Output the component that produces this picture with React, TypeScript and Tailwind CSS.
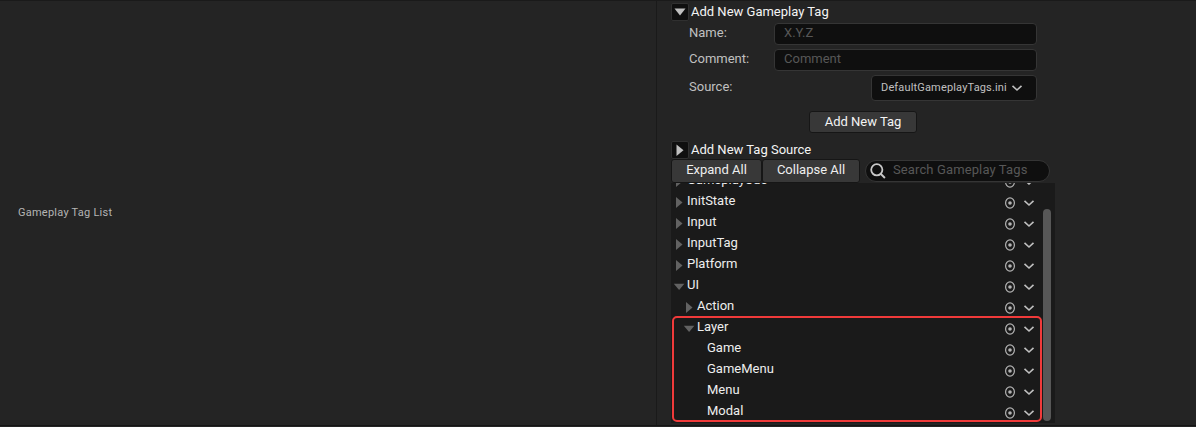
import type { ReactNode } from 'react';

type Row = { label: string; depth: number; state?: 'open' | 'closed' };

const rows: Row[] = [
  { label: 'GameplayCue', depth: 0, state: 'closed' },
  { label: 'InitState', depth: 0, state: 'closed' },
  { label: 'Input', depth: 0, state: 'closed' },
  { label: 'InputTag', depth: 0, state: 'closed' },
  { label: 'Platform', depth: 0, state: 'closed' },
  { label: 'UI', depth: 0, state: 'open' },
  { label: 'Action', depth: 1, state: 'closed' },
  { label: 'Layer', depth: 1, state: 'open' },
  { label: 'Game', depth: 2 },
  { label: 'GameMenu', depth: 2 },
  { label: 'Menu', depth: 2 },
  { label: 'Modal', depth: 2 },
];

const indents = ['pl-0', 'pl-[10px]', 'pl-[20px]'];

function Chevron() {
  return (
    <svg width="12" height="8" viewBox="0 0 12 8" fill="none" stroke="#c0c0c0" strokeWidth="1.6">
      <path d="M1.5 1.8 6 6 10.5 1.8" />
    </svg>
  );
}

function Arrow({ state }: { state?: 'open' | 'closed' }) {
  return (
    <svg width="16" height="21" viewBox="0 0 16 21" className="shrink-0" fill="#626262">
      {state === 'closed' && <path d="M5 7v11l6.5-5.5z" />}
      {state === 'open' && <path d="M2.8 9.8h10.6L8.1 16z" />}
    </svg>
  );
}

function TreeRow({ row }: { row: Row }) {
  return (
    <div className="flex h-[21px] shrink-0 items-center">
      <div className={`flex w-[333px] items-center ${indents[row.depth]}`}>
        <Arrow state={row.state} />
        <span className="leading-[21px] text-[#eeeeee]">{row.label}</span>
      </div>
      <svg width="12" height="14" viewBox="0 0 12 14" className="mt-[5px]" fill="none">
        <ellipse cx="6" cy="7" rx="4.4" ry="5.1" stroke="#b4b4b4" strokeWidth="1.2" />
        <circle cx="6" cy="7" r="1.8" fill="#b4b4b4" />
      </svg>
      <div className="mt-[5px] ml-[7px]">
        <Chevron />
      </div>
    </div>
  );
}

function Header({ open, children }: { open?: boolean; children: ReactNode }) {
  return (
    <div className="flex h-[18px] items-center">
      <div className="flex size-[18px] items-center justify-center rounded-[2px] border border-[#303030] bg-[#0f0f0f]">
        <svg width="16" height="16" viewBox="0 0 16 16" className="shrink-0" fill="#c0c0c0">
          {open ? <path d="M2.5 4.5h11L8 11.5z" /> : <path d="M4.5 2.5v11.5L11.5 8.2z" />}
        </svg>
      </div>
      <span className="ml-[2px] leading-[18px] text-[#f4f4f4]">{children}</span>
    </div>
  );
}

function Field({ label, placeholder }: { label: string; placeholder: string }) {
  return (
    <div className="flex h-[22px] pl-[18px]">
      <span className="w-[85px] leading-[19px] text-[#c0c0c0]">{label}</span>
      <div className="w-[263px] rounded-[4px] border border-[#353535] bg-[#0f0f0f] pl-[9px] leading-[18px] text-[#575757]">
        {placeholder}
      </div>
    </div>
  );
}

export default function App() {
  return (
    <div className="flex h-[427px] w-[1196px] flex-col overflow-hidden border-t border-[#1a1a1a] bg-[#242424] font-['Roboto',sans-serif] text-[13px] whitespace-nowrap">
      <div className="flex h-[424px]">
        <div className="flex w-[657px] items-center border-r border-[#1a1a1a] pl-[18px] text-[11px] tracking-[0.24px] text-[#b4b4b4]">
          Gameplay Tag List
        </div>
        <div className="w-[400px] pt-[2px] pl-[14px]">
          <Header open>Add New Gameplay Tag</Header>
          <div className="mt-[2px] flex flex-col gap-[4px]">
            <Field label="Name:" placeholder="X.Y.Z" />
            <Field label="Comment:" placeholder="Comment" />
          </div>
          <div className="mt-[4px] flex h-[26px] pl-[18px]">
            <span className="w-[182px] leading-[24px] text-[#c0c0c0]">Source:</span>
            <div className="flex w-[166px] items-center rounded-[4px] border border-[#353535] bg-[#0f0f0f] pl-[9px] text-[11px] tracking-[0.16px] text-[#c0c0c0]">
              <span className="w-[130px]">DefaultGameplayTags.ini</span>
              <Chevron />
            </div>
          </div>
          <button className="mt-[10px] ml-[138px] block h-[22px] w-[108px] rounded-[3px] border border-[#161616] bg-[#383838] leading-[20px] text-[#f4f4f4]">
            Add New Tag
          </button>
          <div className="mt-[8px]">
            <Header>Add New Tag Source</Header>
          </div>
          <div className="flex h-[24px]">
            <button className="h-[24px] w-[91px] rounded-[3px] border border-[#161616] bg-[#383838] pb-[2px] text-[#eeeeee]">
              Expand All
            </button>
            <button className="h-[24px] w-[98px] rounded-[3px] border border-[#161616] bg-[#383838] pb-[2px] text-[#eeeeee]">
              Collapse All
            </button>
            <div className="mt-[1px] ml-[5px] flex h-[22px] w-[185px] rounded-full border border-[#353535] bg-[#0f0f0f] pl-[3px]">
              <svg width="18" height="18" viewBox="0 0 18 18" className="mt-[1px]" fill="none" stroke="#c8c8c8" strokeWidth="1.8">
                <circle cx="7.8" cy="7.8" r="5.6" />
                <path d="m11.9 12 4 4" />
              </svg>
              <span className="ml-[6px] leading-[18px] tracking-[0.12px] text-[#575757]">Search Gameplay Tags</span>
            </div>
          </div>
          <div className="relative h-[240px] w-[384px] bg-[#1a1a1a]">
            <div className="flex h-full flex-col justify-end overflow-hidden pb-[2px]">
              {rows.map((row) => (
                <TreeRow key={row.label} row={row} />
              ))}
            </div>
            <div className="absolute top-[26px] right-[4px] h-[212px] w-[8px] rounded-full bg-[#575757]" />
            <div className="absolute top-[133px] left-[1px] h-[106px] w-[370px] rounded-[5px] border-2 border-[#f03a3a]" />
          </div>
        </div>
      </div>
      <div className="h-[1px] bg-[#151515]" />
    </div>
  );
}
